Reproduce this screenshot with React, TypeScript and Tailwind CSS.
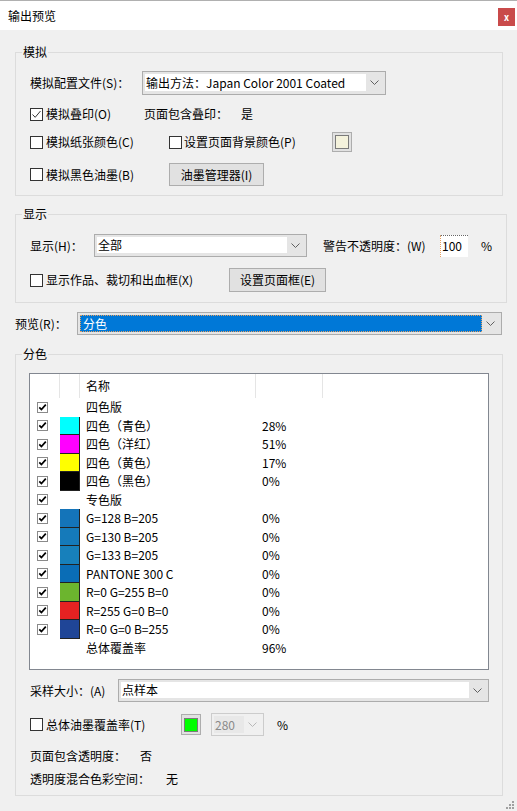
import React from 'react';

const FONT = "font-['Noto_Sans_CJK_SC','Microsoft_YaHei',sans-serif]";

interface Sep {
  name: string;
  value?: string;
  swatch?: string;
  checked?: boolean;
}

const separations: Sep[] = [
  { name: '四色版', checked: true },
  { name: '四色（青色）', value: '28%', swatch: '#00ffff', checked: true },
  { name: '四色（洋红）', value: '51%', swatch: '#ff00ff', checked: true },
  { name: '四色（黄色）', value: '17%', swatch: '#ffff00', checked: true },
  { name: '四色（黑色）', value: '0%', swatch: '#000000', checked: true },
  { name: '专色版', checked: true },
  { name: 'G=128 B=205', value: '0%', swatch: '#1474b9', checked: true },
  { name: 'G=130 B=205', value: '0%', swatch: '#157aba', checked: true },
  { name: 'G=133 B=205', value: '0%', swatch: '#1780bb', checked: true },
  { name: 'PANTONE 300 C', value: '0%', swatch: '#0a6db6', checked: true },
  { name: 'R=0 G=255 B=0', value: '0%', swatch: '#6cb52e', checked: true },
  { name: 'R=255 G=0 B=0', value: '0%', swatch: '#e52222', checked: true },
  { name: 'R=0 G=0 B=255', value: '0%', swatch: '#1f4597', checked: true },
  { name: '总体覆盖率', value: '96%', checked: false },
];

const Chevron = ({ color = '#606060' }: { color?: string }) => (
  <svg width="9" height="5" viewBox="0 0 9 5">
    <path d="M0.5 0.5 L4.5 4.5 L8.5 0.5" fill="none" stroke={color} strokeWidth="1" />
  </svg>
);

const Check = ({ checked }: { checked?: boolean }) => (
  <span className="w-[13px] h-[13px] border border-[#333] bg-white flex items-center justify-center shrink-0">
    {checked && (
      <svg width="11" height="11" viewBox="0 0 11 11">
        <path d="M1.5 5.5 L4.2 8.3 L9.5 2" fill="none" stroke="#333" strokeWidth="1" />
      </svg>
    )}
  </span>
);

const ListCheck = () => (
  <span className="w-[11px] h-[11px] border border-[#8a8a8a] bg-white flex items-center justify-center">
    <svg width="9" height="9" viewBox="0 0 9 9">
      <path d="M1.3 4.4 L3.4 6.6 L7.8 1.6" fill="none" stroke="#000" strokeWidth="1.7" />
    </svg>
  </span>
);

const Combo = ({ value, className }: { value: string; className: string }) => (
  <div className={`border border-[#acacac] bg-[#e5e5e5] flex p-[2px] pb-[3px] ${className}`}>
    <div className="flex-1 bg-white flex items-center pl-[1px] whitespace-nowrap overflow-hidden">{value}</div>
    <div className="w-[17px] flex items-center justify-center">
      <Chevron />
    </div>
  </div>
);

const Button = ({ label, className }: { label: string; className: string }) => (
  <div className={`border border-[#adadad] bg-[#e1e1e1] flex items-center justify-center ${className}`}>{label}</div>
);

const ColorButton = ({ color, className }: { color: string; className: string }) => (
  <div className={`border border-[#adadad] bg-[#e1e1e1] flex items-center justify-center ${className}`}>
    <div className="w-[14px] h-[14px] border border-[#7a7a7a]" style={{ backgroundColor: color }} />
  </div>
);

const App: React.FC = () => {
  return (
    <div className={`w-[517px] h-[811px] bg-[#f0f0f0] relative overflow-hidden text-[12px] text-black leading-none ${FONT}`}>
      {/* title bar */}
      <div className="h-[30px] bg-white border-t border-[#b0b0b0] flex">
        <div className="pl-[8px] pt-[9px] text-[12px]">输出预览</div>
        <div className="ml-auto mr-[2px] mt-[7px] w-[17px] h-[18px] bg-[#c94a4a] flex items-center justify-center text-white text-[9px] font-bold">x</div>
      </div>

      <div className="px-[15px]">
        {/* 模拟 */}
        <fieldset className="mt-[14px] w-[488px] border border-[#dcdcdc] pb-[9px]">
          <legend className="ml-[6px] px-[1px] leading-[16px]">模拟</legend>
          <div className="px-[14px]">
            <div className="mt-[11px] flex items-center h-[24px]">
              <span className="w-[112px]">模拟配置文件(S)：</span>
              <Combo value="输出方法：Japan Color 2001 Coated" className="w-[244px] h-[24px]" />
            </div>
            <div className="mt-[9px] flex items-center h-[20px]">
              <Check checked />
              <span className="ml-[3px] w-[98px]">模拟叠印(O)</span>
              <span className="w-[97px]">页面包含叠印：</span>
              <span>是</span>
            </div>
            <div className="mt-[8px] flex items-center h-[20px]">
              <Check />
              <span className="ml-[3px] w-[123px]">模拟纸张颜色(C)</span>
              <Check />
              <span className="ml-[2px] w-[148px]">设置页面背景颜色(P)</span>
              <ColorButton color="#f4f2dc" className="w-[20px] h-[20px]" />
            </div>
            <div className="mt-[11px] flex items-center h-[23px]">
              <Check />
              <span className="ml-[3px] w-[123px]">模拟黑色油墨(B)</span>
              <Button label="油墨管理器(I)" className="w-[95px] h-[23px]" />
            </div>
          </div>
        </fieldset>

        {/* 显示 */}
        <fieldset className="mt-[10px] w-[488px] border border-[#dcdcdc] pb-[10px]">
          <legend className="ml-[6px] px-[1px] leading-[16px]">显示</legend>
          <div className="px-[14px]">
            <div className="mt-[12px] flex items-center h-[23px]">
              <span className="w-[64px]">显示(H)：</span>
              <Combo value="全部" className="w-[213px] h-[23px]" />
              <span className="ml-[16px] w-[117px]">警告不透明度：(W)</span>
              <div className="w-[28px] h-[22px] bg-white border-t border-t-[#666] border-l border-l-[#e8a060] border-dotted flex items-center pl-[1px]">100</div>
              <span className="ml-[13px]">%</span>
            </div>
            <div className="mt-[11px] flex items-center h-[24px]">
              <Check />
              <span className="ml-[3px] w-[183px]">显示作品、裁切和出血框(X)</span>
              <Button label="设置页面框(E)" className="w-[97px] h-[24px]" />
            </div>
          </div>
        </fieldset>

        {/* 预览 */}
        <div className="mt-[9px] flex items-center h-[23px]">
          <span className="w-[62px]">预览(R)：</span>
          <div className="w-[426px] h-[23px] border border-[#acacac] bg-[#e5e5e5] flex p-[2px] pb-[2px]">
            <div className="flex-1 bg-[#0078d7] text-white flex items-center pl-[2px] border border-dotted border-[#e8a060]">分色</div>
            <div className="w-[17px] flex items-center justify-center">
              <Chevron />
            </div>
          </div>
        </div>

        {/* 分色 */}
        <fieldset className="mt-[11px] w-[488px] border border-[#dcdcdc] pb-[6px]">
          <legend className="ml-[6px] px-[1px] leading-[16px]">分色</legend>
          <div className="px-[13px]">
            <div className="mt-[11px] w-[460px] h-[297px] border border-[#828790] bg-white">
              <div className="flex h-[24px]">
                <div className="w-[30px] border-r border-[#e5e5e5]" />
                <div className="w-[20px] border-r border-[#e5e5e5]" />
                <div className="w-[176px] border-r border-[#e5e5e5] flex items-center pl-[6px]">名称</div>
                <div className="w-[67px] border-r border-[#e5e5e5]" />
              </div>
              {separations.map((s, i) => (
                <div key={i} className="flex h-[18.5px] items-center">
                  <div className="w-[30px] pl-[7px] flex items-center">{s.checked && <ListCheck />}</div>
                  <div className="w-[20px] h-full">
                    {s.swatch && (
                      <div className="w-[20px] h-full border-r border-b border-[#222]" style={{ backgroundColor: s.swatch }} />
                    )}
                  </div>
                  <div className="w-[176px] pl-[6px] whitespace-nowrap">{s.name}</div>
                  <div className="pl-[6px]">{s.value}</div>
                </div>
              ))}
            </div>

            <div className="mt-[9px] flex items-center h-[23px] pl-[1px]">
              <span className="w-[88px]">采样大小：(A)</span>
              <Combo value="点样本" className="w-[371px] h-[23px]" />
            </div>
            <div className="mt-[11px] flex items-center h-[23px] pl-[1px]">
              <Check />
              <span className="ml-[3px] w-[135px]">总体油墨覆盖率(T)</span>
              <ColorButton color="#00ff00" className="w-[20px] h-[21px]" />
              <div className="ml-[10px] w-[53px] h-[23px] border border-[#cccccc] flex p-[2px]">
                <div className="w-[30px] bg-[#e8e8e8] text-[#8a8a8a] flex items-center pl-[1px]">280</div>
                <div className="flex-1 flex items-center justify-center">
                  <Chevron color="#b8b8b8" />
                </div>
              </div>
              <span className="ml-[13px]">%</span>
            </div>
            <div className="mt-[10px] flex items-center h-[20px] pl-[1px]">
              <span className="w-[110px]">页面包含透明度：</span>
              <span>否</span>
            </div>
            <div className="mt-[3px] flex items-center h-[20px] pl-[1px]">
              <span className="w-[136px]">透明度混合色彩空间：</span>
              <span>无</span>
            </div>
          </div>
        </fieldset>
      </div>

      {/* resize grip */}
      <svg className="absolute right-[3px] bottom-[2px]" width="10" height="10" viewBox="0 0 10 10">
        {[
          [8, 0], [8, 3], [5, 3], [8, 6], [5, 6], [2, 6],
        ].map(([x, y], i) => (
          <rect key={i} x={x} y={y + 2} width="2" height="2" fill="#a0a0a0" />
        ))}
      </svg>
    </div>
  );
};

export default App;
